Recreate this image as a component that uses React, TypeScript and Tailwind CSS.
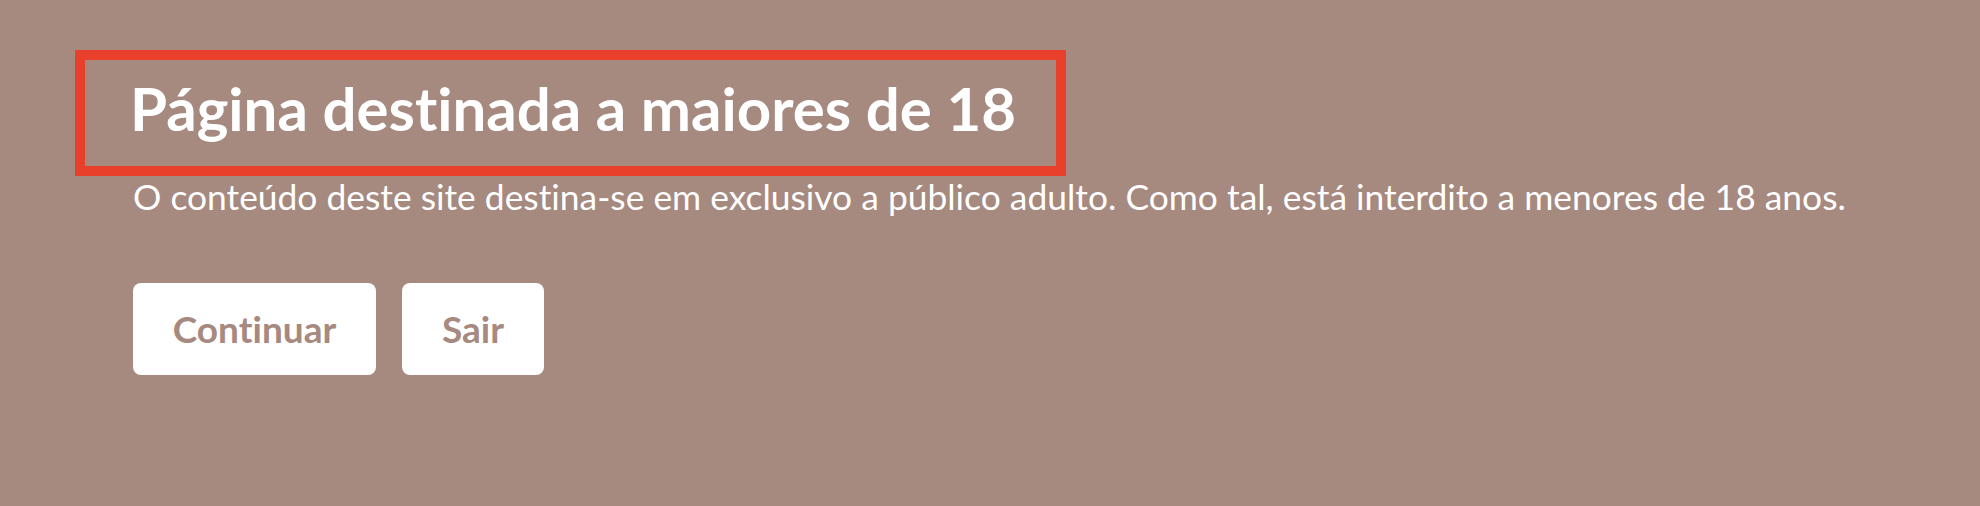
export default function App() {
  return (
    <div
      className="min-h-screen w-full bg-[#a6897f] pt-[50px] pl-[75px] text-white [font-variant-ligatures:none]"
      style={{ fontFamily: "Lato, 'Open Sans', sans-serif" }}
    >
      {/* heading box */}
      <div className="flex h-[126px] w-[991px] items-center border-[10px] border-[#e8402a] pb-[10px] pl-[45px]">
        <h1 className="text-[60px] leading-none font-bold">Página destinada a maiores de 18</h1>
      </div>

      <div className="ml-[58px]">
        <p className="-mt-[1px] text-[35.4px] leading-[44px]">
          O conteúdo deste site destina-se em exclusivo a público adulto. Como tal, está interdito a
          menores de 18 anos.
        </p>

        <div className="mt-[64px] flex gap-[26px]">
          <button className="h-[92px] w-[243px] rounded-lg bg-white text-[37px] font-bold text-[#a6897f]">
            Continuar
          </button>
          <button className="h-[92px] w-[142px] rounded-lg bg-white text-[37px] font-bold text-[#a6897f]">
            Sair
          </button>
        </div>
      </div>
    </div>
  );
}
